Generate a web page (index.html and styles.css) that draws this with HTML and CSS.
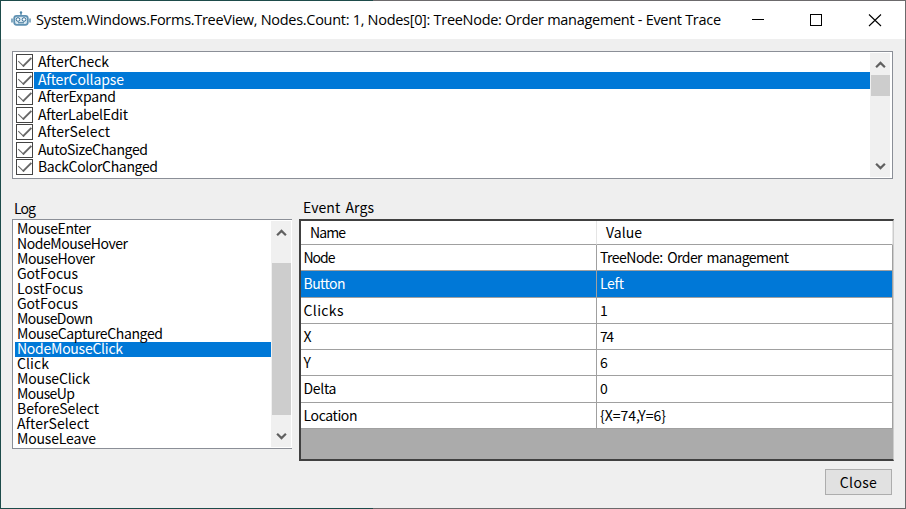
FILE: index.html
```
<!DOCTYPE html>
<html lang="en">
<head>
<meta charset="utf-8">
<title>Event Trace</title>
<link rel="stylesheet" href="styles.css">
</head>
<body>
<div class="window">
  <header class="titlebar">
    <svg class="robot" viewBox="0 0 20 16" width="20" height="16">
      <path d="M10 2v3" stroke="#6f9cb8" stroke-width="1.5"/>
      <circle cx="10" cy="1.5" r="1.2" fill="#4d86aa"/>
      <path d="M1 7.5v4M19 7.5v4" stroke="#79a3bd" stroke-width="1.8"/>
      <rect x="3.2" y="4.8" width="13.6" height="9" rx="2.5" fill="#d8e7f0" stroke="#5f91b2" stroke-width="1.8"/>
      <circle cx="7" cy="8.5" r="1.8" fill="#fff" stroke="#376f95"/>
      <circle cx="13" cy="8.5" r="1.8" fill="#fff" stroke="#376f95"/>
      <path d="M7 11.8h6" stroke="#376f95"/>
    </svg>
    <h1 class="title"><span class="fit" data-w="685">System.Windows.Forms.TreeView, Nodes.Count: 1, Nodes[0]: TreeNode: Order management - Event Trace</span></h1>
    <svg class="controls" width="130" height="14" viewBox="0 0 130 14" fill="none" stroke="#000">
      <path d="M0 6.5h12"/>
      <rect x="58.5" y="1.5" width="11" height="11"/>
      <path d="M117 1.5l12 11.5M129 1.5l-12 11.5" stroke-width="1.1"/>
    </svg>
  </header>

  <section class="box events">
    <ul class="checks">
      <li><i class="check"></i><span class="name"><span class="fit" data-w="71">AfterCheck</span></span></li>
      <li class="selected"><i class="check"></i><span class="name"><span class="fit" data-w="86">AfterCollapse</span></span></li>
      <li><i class="check"></i><span class="name"><span class="fit" data-w="78">AfterExpand</span></span></li>
      <li><i class="check"></i><span class="name"><span class="fit" data-w="90">AfterLabelEdit</span></span></li>
      <li><i class="check"></i><span class="name"><span class="fit" data-w="72">AfterSelect</span></span></li>
      <li><i class="check"></i><span class="name"><span class="fit" data-w="110">AutoSizeChanged</span></span></li>
      <li><i class="check"></i><span class="name"><span class="fit" data-w="120">BackColorChanged</span></span></li>
    </ul>
    <div class="scrollbar">
      <svg class="arrow" viewBox="0 0 10 8"><path d="M1 6.5L5 2.5l4 4"/></svg>
      <div class="thumb short"></div>
      <svg class="arrow down" viewBox="0 0 10 8"><path d="M1 1.5l4 4 4-4"/></svg>
    </div>
  </section>

  <main class="panes">
    <section class="logpane">
      <h2 class="label"><span class="fit" data-w="22">Log</span></h2>
      <div class="box log">
        <ul class="entries">
          <li><span class="fit" data-w="74">MouseEnter</span></li>
          <li><span class="fit" data-w="111">NodeMouseHover</span></li>
          <li><span class="fit" data-w="78">MouseHover</span></li>
          <li><span class="fit" data-w="61">GotFocus</span></li>
          <li><span class="fit" data-w="66">LostFocus</span></li>
          <li><span class="fit" data-w="61">GotFocus</span></li>
          <li><span class="fit" data-w="76">MouseDown</span></li>
          <li><span class="fit" data-w="146">MouseCaptureChanged</span></li>
          <li class="selected"><span class="fit" data-w="106">NodeMouseClick</span></li>
          <li><span class="fit" data-w="32">Click</span></li>
          <li><span class="fit" data-w="73">MouseClick</span></li>
          <li><span class="fit" data-w="58">MouseUp</span></li>
          <li><span class="fit" data-w="82">BeforeSelect</span></li>
          <li><span class="fit" data-w="72">AfterSelect</span></li>
          <li><span class="fit" data-w="79">MouseLeave</span></li>
        </ul>
        <div class="scrollbar">
          <svg class="arrow" viewBox="0 0 10 8"><path d="M1 6.5L5 2.5l4 4"/></svg>
          <div class="thumb tall"></div>
          <svg class="arrow down" viewBox="0 0 10 8"><path d="M1 1.5l4 4 4-4"/></svg>
        </div>
      </div>
    </section>

    <section class="argspane">
      <h2 class="label"><span class="fit" data-w="71">Event Args</span></h2>
      <div class="grid">
        <div class="row head"><div><span class="fit" data-w="36">Name</span></div><div><span class="fit" data-w="36">Value</span></div></div>
        <div class="row"><div><span class="fit" data-w="32">Node</span></div><div><span class="fit" data-w="189">TreeNode: Order management</span></div></div>
        <div class="row selected"><div><span class="fit" data-w="42">Button</span></div><div><span class="fit" data-w="24">Left</span></div></div>
        <div class="row"><div><span class="fit" data-w="40">Clicks</span></div><div>1</div></div>
        <div class="row"><div>X</div><div><span class="fit" data-w="14">74</span></div></div>
        <div class="row"><div>Y</div><div>6</div></div>
        <div class="row"><div><span class="fit" data-w="33">Delta</span></div><div>0</div></div>
        <div class="row"><div><span class="fit" data-w="54">Location</span></div><div><span class="fit" data-w="66">{X=74,Y=6}</span></div></div>
      </div>
    </section>
  </main>

  <footer class="footer"><button class="close"><span class="fit" data-w="37">Close</span></button></footer>
</div>
<script src="fit.js"></script>
</body>
</html>
```
FILE: fit.js
```
document.querySelectorAll('.fit').forEach(function (el) {
  var n = el.textContent.length;
  if (n < 2) return;
  var natural = el.getBoundingClientRect().width;
  var gap = (Number(el.dataset.w) - natural) / (n - 1);
  el.style.letterSpacing = gap.toFixed(3) + 'px';
});
```
FILE: styles.css
```
* { box-sizing: border-box; }
html, body { margin: 0; padding: 0; }
body { width: 906px; height: 509px; overflow: hidden; }
ul { list-style: none; margin: 0; padding: 0; }
h1, h2 { margin: 0; font-weight: 400; }

.window {
  width: 906px;
  height: 509px;
  padding: 1px;
  display: flex;
  flex-direction: column;
  color: #000;
  font-family: "Noto Sans CJK JP", sans-serif;
  font-size: 14px;
  background:
    linear-gradient(#efefef, #efefef) 1px 1px / 904px 507px no-repeat,
    linear-gradient(90deg, #1d4b4a 373px, #6c6a6c 373px);
}
.fit { white-space: nowrap; word-spacing: 2px; }

.titlebar {
  height: 38px;
  flex: none;
  display: flex;
  align-items: center;
  padding: 0 23px 0 10px;
  background: #fff;
}
.robot { flex: none; margin-top: -2px; }
.title {
  flex: 1;
  margin-left: 5px;
  margin-top: -1px;
  font-family: "Open Sans", "Noto Sans", sans-serif;
  font-size: 14.5px;
  line-height: 20px;
  white-space: nowrap;
}
.title .fit { word-spacing: 0; }
.controls { flex: none; }

.box {
  display: flex;
  background: #fff;
  border: 1px solid #8b8f97;
}
.events {
  flex: none;
  height: 128px;
  margin: 12px 12px 0 11px;
  padding: 1px 2px 1px 1px;
}
.checks { flex: 1; padding: 1px 0 0 2px; }
.checks li {
  display: flex;
  align-items: flex-start;
  height: 17.5px;
}
.check {
  flex: none;
  width: 17px;
  height: 16px;
  margin-right: 1px;
  border: 1px solid #444;
  display: flex;
  align-items: center;
  justify-content: center;
}
.check::before {
  content: "";
  width: 11px;
  height: 6px;
  margin-top: -4px;
  border-left: 1.6px solid #666;
  border-bottom: 2px solid #666;
  transform: rotate(-45deg);
}
.name { flex: 1; height: 17.5px; line-height: 14px; padding-left: 4px; }
.selected .name, .entries .selected, .row.selected > div { background: #0078d7; color: #fff; }

.scrollbar {
  width: 20px;
  flex: none;
  display: flex;
  flex-direction: column;
  align-items: center;
  background: #f0f0f0;
}
.arrow {
  width: 11px;
  height: 9px;
  flex: none;
  margin: 7px 0 6px;
  fill: none;
  stroke: #606060;
  stroke-width: 2;
}
.arrow.down { margin: auto 0 6px; }
.thumb { width: 19px; background: #cdcdcd; flex: none; }
.thumb.short { height: 21px; }
.thumb.tall { height: 152px; margin-top: 20px; }

.panes { display: flex; flex: none; height: 282px; padding: 18px 11px 0 11px; }
.logpane { width: 280px; flex: none; margin-right: 7px; }
.argspane { flex: 1; }
.label { height: 22px; font-size: 14px; line-height: 22px; padding-left: 2px; }
.argspane .label { padding-left: 4px; line-height: 20px; }
.box.log { height: 230px; border-right: 0; padding: 1px 1px 1px 2px; }
.entries { flex: 1; padding-top: 1px; }
.entries li {
  height: 15px;
  line-height: 12px;
  padding-left: 2px;
}

.grid {
  height: 242px;
  background: #ababab;
  border: 2px solid #404040;
  border-right: 1px solid #ccc;
}
.row { display: flex; height: 26.25px; line-height: 25px; }
.row > div {
  background: #fff;
  border-bottom: 1px solid #a0a0a0;
  border-right: 1px solid #a0a0a0;
  padding-left: 3px;
}
.row > div:first-child { width: 296px; padding-left: 2.5px; }
.row > div:last-child { flex: 1; }
.row.head { height: 24px; line-height: 23px; }
.row.head > div, .row.head > div:first-child { padding-left: 9px; border-right-color: #e5e5e5; }

.footer { display: flex; justify-content: flex-end; padding: 8px 13px 0 0; }
.close {
  width: 67px;
  height: 26px;
  padding: 0;
  border: 1px solid #adadad;
  background: #e1e1e1;
  color: #000;
  font: 14px/22px "Noto Sans CJK JP", sans-serif;
}
```
